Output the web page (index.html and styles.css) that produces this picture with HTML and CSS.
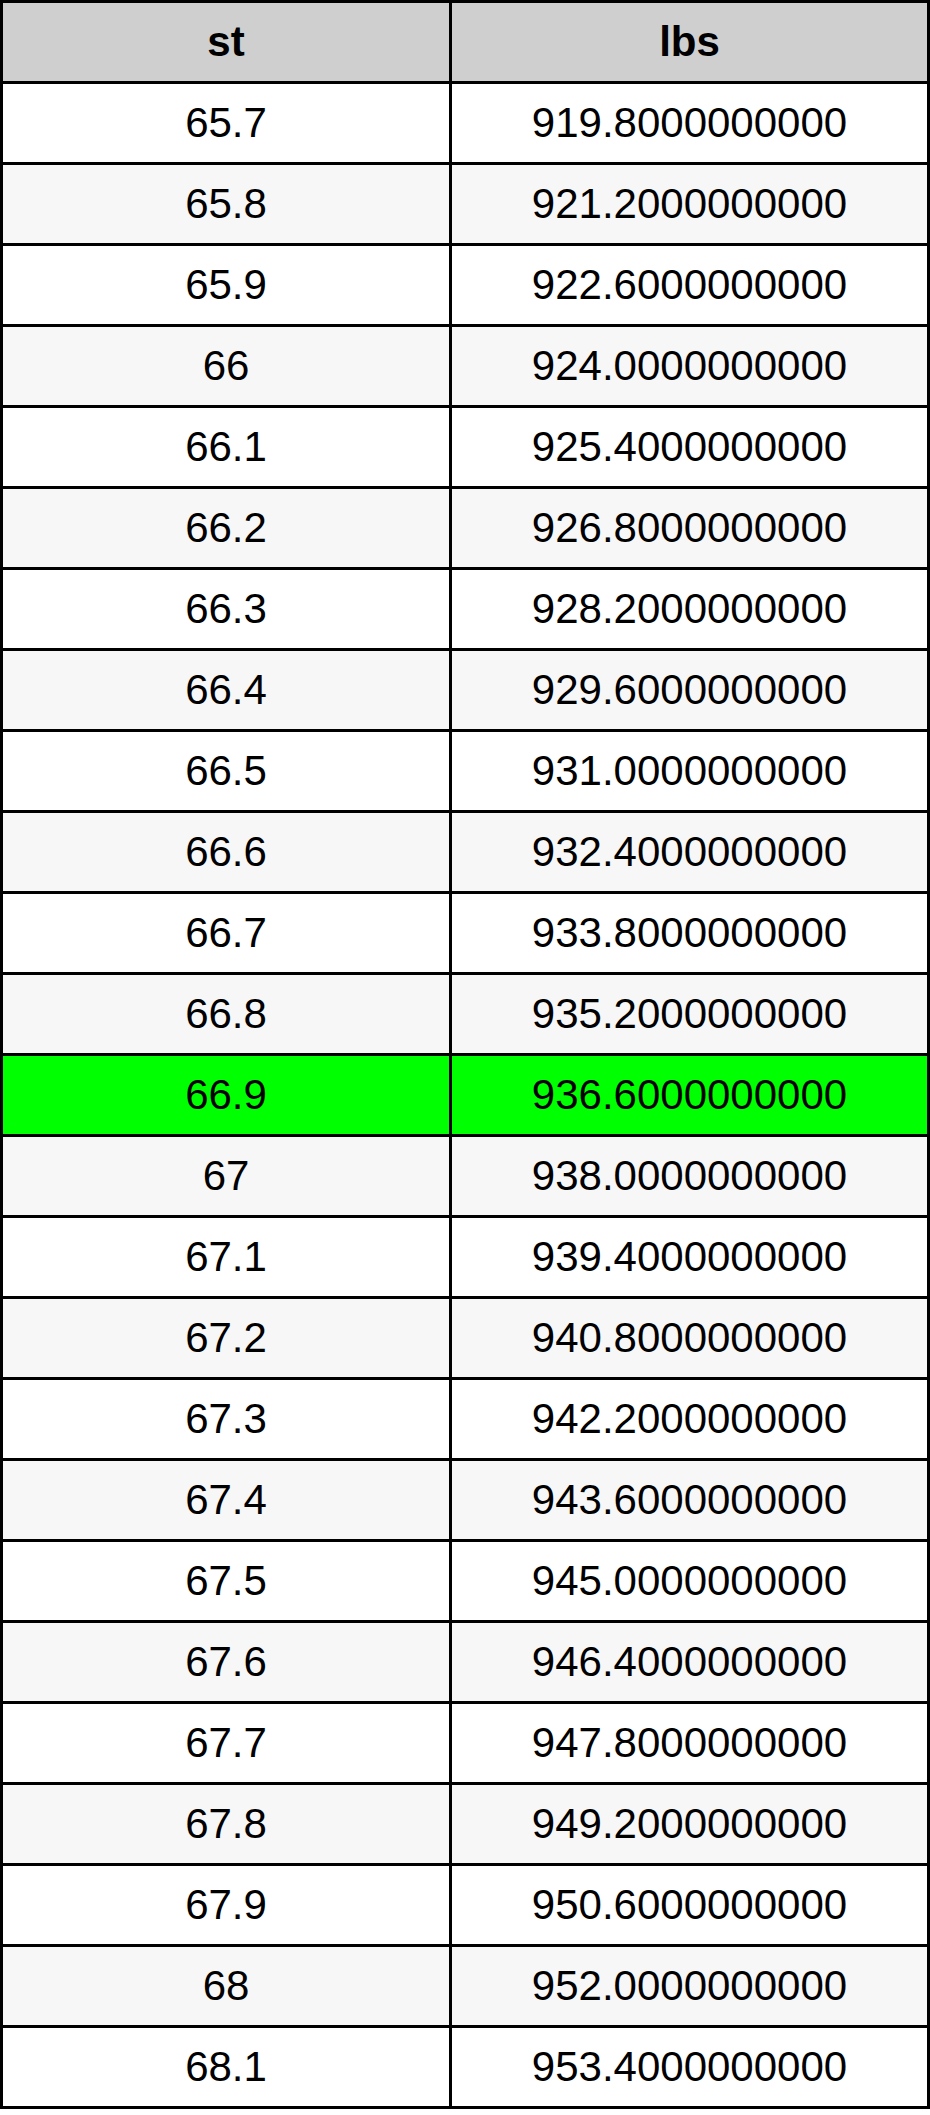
FILE: index.html
```html
<!DOCTYPE html>
<html>
<head>
<meta charset="utf-8">
<link rel="stylesheet" href="styles.css">
</head>
<body>
<table class="conv">
<thead>
<tr><th class="c1">st</th><th class="c2">lbs</th></tr>
</thead>
<tbody>
<tr><td>65.7</td><td>919.8000000000</td></tr>
<tr><td>65.8</td><td>921.2000000000</td></tr>
<tr><td>65.9</td><td>922.6000000000</td></tr>
<tr><td>66</td><td>924.0000000000</td></tr>
<tr><td>66.1</td><td>925.4000000000</td></tr>
<tr><td>66.2</td><td>926.8000000000</td></tr>
<tr><td>66.3</td><td>928.2000000000</td></tr>
<tr><td>66.4</td><td>929.6000000000</td></tr>
<tr><td>66.5</td><td>931.0000000000</td></tr>
<tr><td>66.6</td><td>932.4000000000</td></tr>
<tr><td>66.7</td><td>933.8000000000</td></tr>
<tr><td>66.8</td><td>935.2000000000</td></tr>
<tr class="hl"><td>66.9</td><td>936.6000000000</td></tr>
<tr><td>67</td><td>938.0000000000</td></tr>
<tr><td>67.1</td><td>939.4000000000</td></tr>
<tr><td>67.2</td><td>940.8000000000</td></tr>
<tr><td>67.3</td><td>942.2000000000</td></tr>
<tr><td>67.4</td><td>943.6000000000</td></tr>
<tr><td>67.5</td><td>945.0000000000</td></tr>
<tr><td>67.6</td><td>946.4000000000</td></tr>
<tr><td>67.7</td><td>947.8000000000</td></tr>
<tr><td>67.8</td><td>949.2000000000</td></tr>
<tr><td>67.9</td><td>950.6000000000</td></tr>
<tr><td>68</td><td>952.0000000000</td></tr>
<tr><td>68.1</td><td>953.4000000000</td></tr>
</tbody>
</table>
</body>
</html>
```

FILE: styles.css
```css
html, body {
  margin: 0;
  padding: 0;
  background: #ffffff;
}

.conv {
  border-collapse: separate;
  border-spacing: 0;
  table-layout: fixed;
  width: 930px;
  border-left: 3px solid #000;
  border-top: 3px solid #000;
  box-sizing: border-box;
  font-family: "Liberation Sans", Arial, sans-serif;
  font-size: 42px;
  color: #000;
}

.conv th,
.conv td {
  box-sizing: border-box;
  height: 81px;
  padding: 0;
  text-align: center;
  vertical-align: middle;
  border-right: 3px solid #000;
  border-bottom: 3px solid #000;
  line-height: 1;
}

.conv th {
  background: #cfcfcf;
  font-weight: bold;
}

.conv .c1 {
  width: 449px;
}

.conv .c2 {
  width: 478px;
}

.conv tbody tr:nth-child(odd) td {
  background: #ffffff;
}

.conv tbody tr:nth-child(even) td {
  background: #f7f7f7;
}

.conv tbody tr.hl td {
  background: #00ff00;
}
```
